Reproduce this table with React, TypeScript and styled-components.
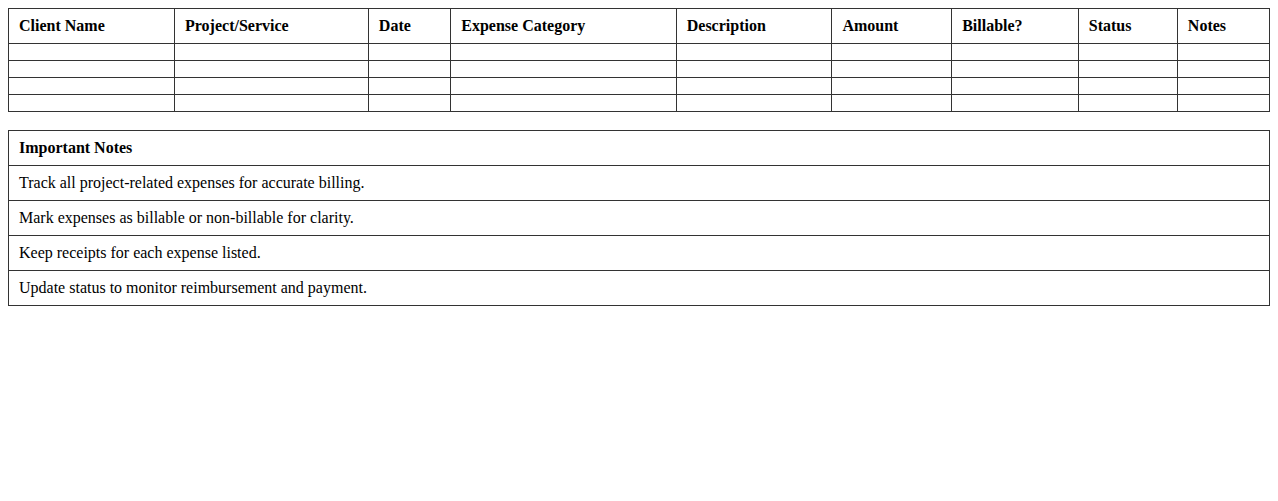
import styled, { createGlobalStyle } from "styled-components";

const GlobalStyle = createGlobalStyle`
  body {
    margin: 8px;
    font-family: "Liberation Serif", "Times New Roman", serif;
    font-size: 16px;
    color: #000;
    background: #fff;
  }
`

const Sheet = styled.table<{ spaced?: boolean }>`
  width: 100%;
  border-collapse: collapse;
  margin-top: ${(props) => (props.spaced ? '18px' : '0')};
`

const HeadCell = styled.th`
  border: 1px solid #333;
  padding: 8px 10px;
  text-align: left;
  font-weight: bold;
  line-height: 18px;
`

const Cell = styled.td`
  border: 1px solid #333;
  padding: 8px 10px;
  text-align: left;
  line-height: 18px;
`

const EmptyCell = styled.td`
  border: 1px solid #333;
  padding: 8px 10px;
  height: 0;
`

const columns = [
  'Client Name',
  'Project/Service',
  'Date',
  'Expense Category',
  'Description',
  'Amount',
  'Billable?',
  'Status',
  'Notes',
]

const notes = [
  'Track all project-related expenses for accurate billing.',
  'Mark expenses as billable or non-billable for clarity.',
  'Keep receipts for each expense listed.',
  'Update status to monitor reimbursement and payment.',
]

const App = () => {
  return (
    <>
      <GlobalStyle />
      <Sheet>
        <thead>
          <tr>
            {columns.map((c) => (
              <HeadCell key={c}>{c}</HeadCell>
            ))}
          </tr>
        </thead>
        <tbody>
          {[0, 1, 2, 3].map((r) => (
            <tr key={r}>
              {columns.map((c) => (
                <EmptyCell key={c} />
              ))}
            </tr>
          ))}
        </tbody>
      </Sheet>
      <Sheet spaced>
        <thead>
          <tr>
            <HeadCell>Important Notes</HeadCell>
          </tr>
        </thead>
        <tbody>
          {notes.map((n) => (
            <tr key={n}>
              <Cell>{n}</Cell>
            </tr>
          ))}
        </tbody>
      </Sheet>
    </>
  )
}

export default App
